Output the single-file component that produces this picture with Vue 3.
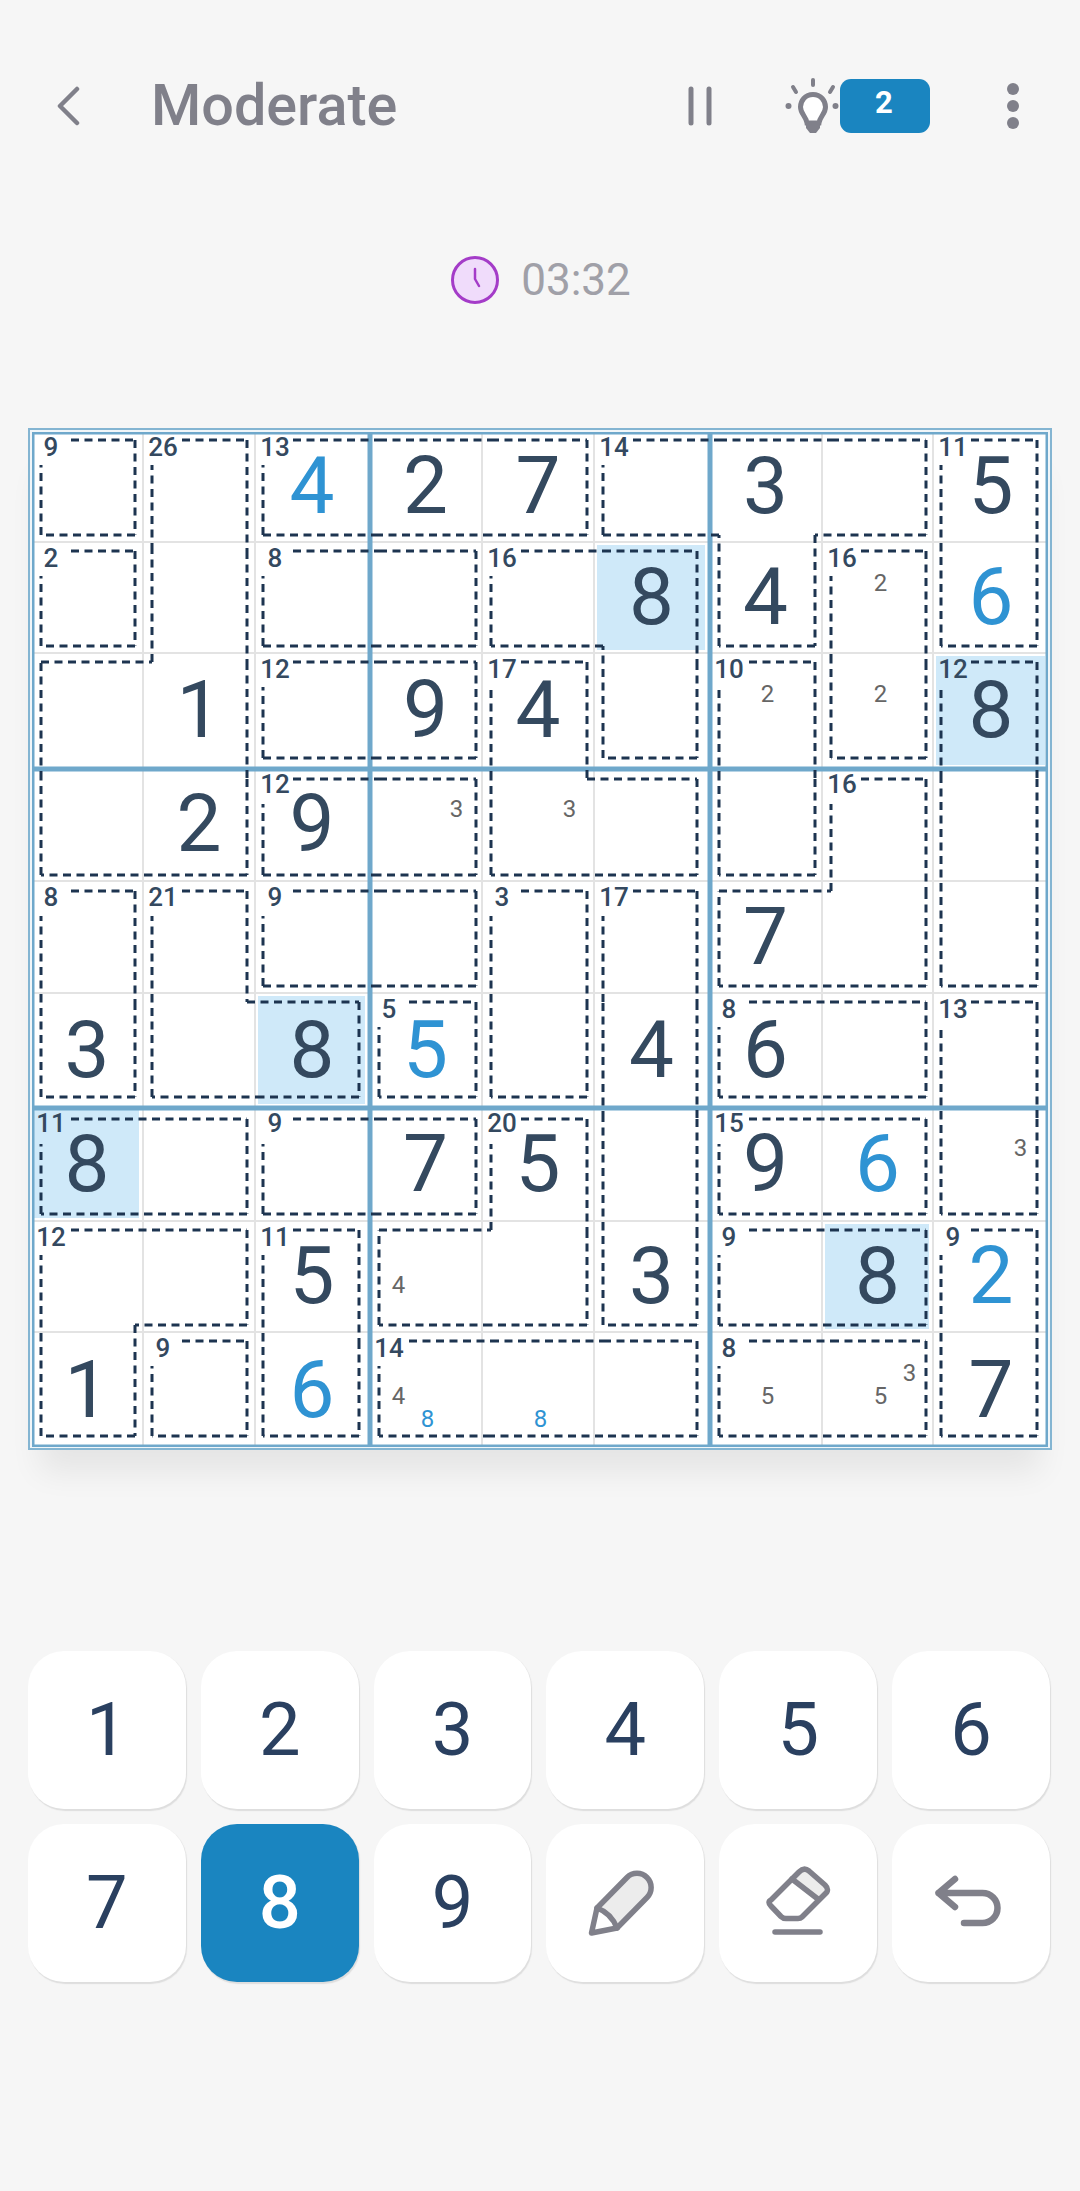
<template>
  <div class="pantalla">
    <header class="cabecera">
      <svg class="atras" width="24" height="40" viewBox="0 0 24 40">
        <polyline points="21,3 4,20 21,37" />
      </svg>
      <h1 class="titulo">Moderate</h1>
      <svg class="pausa" width="26" height="40" viewBox="0 0 26 40">
        <line x1="4" y1="3" x2="4" y2="37" />
        <line x1="22" y1="3" x2="22" y2="37" />
      </svg>
      <svg class="bombilla" width="56" height="56" viewBox="0 0 56 56">
        <path class="bulbo" d="M28 16.5C20 16.5 15.5 23 15.5 29C15.5 36 21 38 22 45L34 45C35 38 40.5 36 40.5 29C40.5 23 36 16.5 28 16.5Z" />
        <path class="casquillo" d="M21 45L35 45L35 50L31 55L25 55L21 50Z" />
        <line x1="28" y1="2" x2="28" y2="7" />
        <line x1="8" y1="9" x2="11" y2="14" />
        <line x1="48" y1="9" x2="45" y2="14" />
        <circle cx="3.5" cy="28" r="3" />
        <circle cx="50.5" cy="28" r="3" />
      </svg>
      <div class="pistas">2</div>
      <svg class="menu" width="12" height="46" viewBox="0 0 12 46">
        <circle cx="6" cy="6" r="6" />
        <circle cx="6" cy="23" r="6" />
        <circle cx="6" cy="40" r="6" />
      </svg>
    </header>

    <div class="tiempo">
      <svg width="48" height="48" viewBox="0 0 48 48">
        <circle class="esfera" cx="24" cy="24" r="22.5" />
        <polyline class="agujas" points="24,13 24,23 28,30" />
      </svg>
      <span>03:32</span>
    </div>

    <section class="tablero">
      <div class="rejilla">
        <div v-for="c in celdas" :key="c.id" class="celda" :class="{ marcada: c.marcada, 'sin-dcha': c.col === 8, 'sin-abajo': c.fila === 8 }">
          <span v-if="c.suma" class="suma">{{ c.suma }}</span>
          <span v-if="c.valor" class="valor" :class="{ azul: c.azul }">{{ c.valor }}</span>
          <div v-if="c.notas.length" class="notas">
            <span
              v-for="n in c.notas"
              :key="n.d"
              class="nota"
              :class="{ azul: n.azul }"
              :style="{ gridColumn: (n.d - 1) % 3 + 1, gridRow: Math.floor((n.d - 1) / 3) + 1 }"
            >{{ n.d }}</span>
          </div>
        </div>
        <svg class="trazos" width="1016" height="1015" viewBox="0 0 1016 1015">
          <rect class="marco" x="1" y="1" width="1014" height="1013" />
          <line class="caja" x1="338" y1="0" x2="338" y2="1015" />
          <line class="caja" x1="678" y1="0" x2="678" y2="1015" />
          <line class="caja" x1="0" y1="337" x2="1016" y2="337" />
          <line class="caja" x1="0" y1="676" x2="1016" y2="676" />
          <line v-for="(t, i) in trazos" :key="i" class="jaula" :x1="t[0]" :y1="t[1]" :x2="t[2]" :y2="t[3]" />
        </svg>
      </div>
    </section>

    <section class="teclado">
      <button v-for="n in 9" :key="n" class="tecla" :class="{ activa: n === 8 }">{{ n }}</button>
      <button class="tecla">
        <svg class="icono" width="80" height="80" viewBox="0 0 80 80">
          <path class="relleno" d="M12 45L42 14.5A14 14 0 0 1 62 34.5L32 65Q26 50 12 45Z" />
          <path d="M12 45L42 14.5A14 14 0 0 1 62 34.5L32 65L6.5 70Z" />
          <path d="M12 45Q26 50 32 65" />
        </svg>
      </button>
      <button class="tecla">
        <svg class="icono" width="80" height="80" viewBox="0 0 80 80">
          <path class="relleno" d="M34 16L41 9Q46 4 51 8L67 22Q72 27 67 31L60.5 36.5Z" />
          <path d="M41 9Q46 4 51 8L67 22Q72 27 67 31L44 54Q42.5 55.5 40 55.5L28 55.5Q25 55.5 23 53.5L13 43Q9 39 13 37Z" />
          <line x1="34" y1="16" x2="60.5" y2="36.5" />
          <line x1="17" y1="69" x2="62" y2="69" />
        </svg>
      </button>
      <button class="tecla">
        <svg class="icono grueso" width="80" height="80" viewBox="0 0 80 80">
          <path d="M24 16L7.5 30L24 44M7.5 30L51.5 30A15 15 0 0 1 51.5 60L33 60" />
        </svg>
      </button>
    </section>
  </div>
</template>

<script setup>
// posiciones de las lineas de jaula, relativas a la rejilla (x - 32, y - 432)
const izq = [9, 120, 231, 347, 459, 571, 687, 799, 909];
const dcha = [103, 215, 327, 444, 555, 665, 783, 894, 1005];
const arriba = [8, 119, 230, 347, 459, 570, 687, 798, 909];
const abajo = [103, 214, 326, 443, 554, 665, 782, 893, 1004];

const valores = [
  "..427.3.5",
  ".....84.6",
  ".1.94...8",
  ".29......",
  "......7..",
  "3.85.46..",
  "8..75.96.",
  "..5..3.82",
  "1.6.....7",
];
const azules = ["0,2", "1,8", "5,3", "6,7", "7,8", "8,2"];
const marcadas = ["1,5", "2,8", "5,2", "6,0", "7,7"];

const notas = {
  "1,7": [{ d: 2 }],
  "2,6": [{ d: 2 }],
  "2,7": [{ d: 2 }],
  "3,3": [{ d: 3 }],
  "3,4": [{ d: 3 }],
  "6,8": [{ d: 3 }],
  "7,3": [{ d: 4 }],
  "8,3": [{ d: 4 }, { d: 8, azul: true }],
  "8,4": [{ d: 8, azul: true }],
  "8,6": [{ d: 5 }],
  "8,7": [{ d: 3 }, { d: 5 }],
};

const jaulas = [
  [9, "0,0"],
  [26, "0,1 1,1 2,1 2,0 3,0 3,1"],
  [13, "0,2 0,3 0,4"],
  [14, "0,5 0,6 0,7 1,6"],
  [11, "0,8 1,8"],
  [2, "1,0"],
  [8, "1,2 1,3"],
  [16, "1,4 1,5 2,5"],
  [16, "1,7 2,7"],
  [12, "2,2 2,3"],
  [17, "2,4 3,4 3,5"],
  [10, "2,6 3,6"],
  [12, "2,8 3,8 4,8"],
  [12, "3,2 3,3"],
  [16, "3,7 4,7 4,6"],
  [8, "4,0 5,0"],
  [21, "4,1 5,1 5,2"],
  [9, "4,2 4,3"],
  [3, "4,4 5,4"],
  [17, "4,5 5,5 6,5 7,5"],
  [5, "5,3"],
  [8, "5,6 5,7"],
  [13, "5,8 6,8"],
  [11, "6,0 6,1"],
  [9, "6,2 6,3"],
  [20, "6,4 7,4 7,3"],
  [15, "6,6 6,7"],
  [12, "7,0 7,1 8,0"],
  [11, "7,2 8,2"],
  [9, "7,6 7,7"],
  [9, "7,8 8,8"],
  [9, "8,1"],
  [14, "8,3 8,4 8,5"],
  [8, "8,6 8,7"],
];

const sumas = {};
const trazos = [];

jaulas.forEach(([suma, lista]) => {
  const set = new Set(lista.split(" "));
  const hay = (f, c) => set.has(`${f},${c}`);
  const claves = [...set];
  sumas[claves[0]] = suma;

  claves.forEach((k, idx) => {
    const [f, c] = k.split(",").map(Number);
    const conSuma = idx === 0;
    const arr = hay(f - 1, c);
    const aba = hay(f + 1, c);
    const ant = hay(f, c - 1);
    const sig = hay(f, c + 1);
    const finX = sig ? izq[c + 1] : dcha[c];
    const finY = aba ? arriba[f + 1] : abajo[f];

    if (!arr) {
      const x1 = ant && hay(f - 1, c - 1) ? dcha[c - 1] : izq[c];
      trazos.push([conSuma ? x1 + 30 : x1, arriba[f], finX, arriba[f]]);
    }
    if (!sig) {
      const y1 = arr && hay(f - 1, c + 1) ? abajo[f - 1] : arriba[f];
      trazos.push([dcha[c], y1, dcha[c], finY]);
    }
    if (!aba) {
      const x1 = ant && hay(f + 1, c - 1) ? dcha[c - 1] : izq[c];
      trazos.push([finX, abajo[f], x1, abajo[f]]);
    }
    if (!ant) {
      const y1 = arr && hay(f - 1, c - 1) ? abajo[f - 1] : arriba[f];
      trazos.push([izq[c], finY, izq[c], conSuma ? y1 + 25 : y1]);
    }
  });
});

const celdas = [];
for (let f = 0; f < 9; f++) {
  const texto = valores[f];
  for (let c = 0; c < 9; c++) {
    const k = `${f},${c}`;
    celdas.push({
      id: k,
      fila: f,
      col: c,
      valor: texto[c] === "." ? "" : texto[c],
      azul: azules.includes(k),
      marcada: marcadas.includes(k),
      suma: sumas[k],
      notas: notas[k] || [],
    });
  }
}
</script>

<style scoped>
.pantalla {
  width: 1080px;
  height: 2191px;
  background: #f6f6f6;
  box-sizing: border-box;
  padding: 79px 28px 0;
  font-family: Roboto, "Liberation Sans", sans-serif;
  overflow: hidden;
}

.cabecera {
  display: flex;
  align-items: center;
  height: 54px;
  padding: 0 33px 0 28px;
}

.atras polyline {
  fill: none;
  stroke: #80808a;
  stroke-width: 4.5;
  stroke-linecap: round;
  stroke-linejoin: round;
}

.titulo {
  margin: 0 0 0 71px;
  font-size: 57.5px;
  font-weight: 500;
  line-height: 54px;
  color: #80808a;
}

.pausa {
  margin-left: auto;
}

.pausa line {
  stroke: #80808a;
  stroke-width: 5;
  stroke-linecap: round;
}

.bombilla {
  margin-left: 72px;
}

.bombilla line {
  stroke: #80808a;
  stroke-width: 4;
  stroke-linecap: round;
}

.bombilla circle,
.casquillo {
  fill: #80808a;
}

.bulbo {
  fill: #fff;
  stroke: #80808a;
  stroke-width: 5;
}

.pistas {
  width: 90px;
  height: 54px;
  margin-left: -1px;
  padding: 0 2px 8px 0;
  box-sizing: border-box;
  border-radius: 11px;
  background: #1a85c0;
  color: #fff;
  font-size: 31px;
  font-weight: 700;
  display: flex;
  align-items: center;
  justify-content: center;
}

.menu {
  margin-left: 77px;
}

.menu circle {
  fill: #80808a;
}

.tiempo {
  margin-top: 123px;
  height: 48px;
  padding-left: 2px;
  display: flex;
  align-items: center;
  justify-content: center;
  gap: 22px;
  font-size: 44px;
  color: #a0a0a8;
}

.esfera {
  fill: #f0dcfb;
  stroke: #a43cc8;
  stroke-width: 3;
}

.agujas {
  fill: none;
  stroke: #a43cc8;
  stroke-width: 2.5;
  stroke-linecap: round;
  stroke-linejoin: round;
}

.tablero {
  margin-top: 124px;
  width: 1024px;
  box-sizing: border-box;
  border: 2px solid #84b5d2;
  padding: 2px 2px 1px;
  background: #f1f6f9;
  box-shadow: 0 34px 30px -12px rgba(0, 0, 0, 0.07);
}

.rejilla {
  position: relative;
  display: grid;
  grid-template-columns: 112px 112px 114px 113px 112px 115px 113px 111px 114px;
  grid-template-rows: 111px 111px 115px 113px 112px 114px 114px 111px 114px;
  background: #fff;
}

.celda {
  position: relative;
  box-sizing: border-box;
  border-right: 2px solid #e3e3e3;
  border-bottom: 2px solid #e3e3e3;
  display: flex;
  align-items: center;
  justify-content: center;
  padding-bottom: 1px;
}

.celda.sin-dcha {
  border-right: 0;
}

.celda.sin-abajo {
  border-bottom: 0;
}

.celda.marcada {
  background: linear-gradient(#cfe9f9, #cfe9f9) 2px 2px / calc(100% - 5px) calc(100% - 4px) no-repeat;
}

.valor {
  font-size: 80px;
  line-height: 1;
  color: #34495f;
}

.valor.azul {
  color: #2f93d3;
}

.suma {
  position: absolute;
  left: 0;
  top: 0;
  width: 38px;
  text-align: center;
  font-size: 26px;
  font-weight: 500;
  line-height: 30px;
  color: #34495f;
}

.notas {
  position: absolute;
  left: 14px;
  top: 29px;
  display: grid;
  grid-template-columns: repeat(3, 29px);
  grid-template-rows: repeat(3, 23px);
}

.nota {
  display: flex;
  align-items: center;
  justify-content: center;
  font-size: 24px;
  line-height: 23px;
  color: #666;
}

.nota.azul {
  color: #2f93d3;
}

.trazos {
  position: absolute;
  left: 0;
  top: 0;
  pointer-events: none;
}

.marco {
  fill: none;
  stroke: #6fa8cb;
  stroke-width: 3;
}

.caja {
  stroke: #6fa8cb;
  stroke-width: 5;
}

.jaula {
  stroke: #1d3450;
  stroke-width: 3;
  stroke-dasharray: 8 5.5;
}

.teclado {
  margin-top: 201px;
  width: 1022px;
  display: grid;
  grid-template-columns: repeat(6, 1fr);
  grid-auto-rows: 158px;
  gap: 15px;
}

.tecla {
  border: 0;
  padding: 0;
  border-radius: 36px;
  background: #fff;
  box-shadow: 1px 1.5px 1px #dedede;
  color: #2a4060;
  font-family: inherit;
  font-size: 74px;
  line-height: 1;
  display: flex;
  align-items: center;
  justify-content: center;
}

.tecla.activa {
  background: #1a85c0;
  color: #fff;
  font-weight: 500;
}

.icono path,
.icono line {
  fill: none;
  stroke: #80808a;
  stroke-width: 5.5;
  stroke-linecap: round;
  stroke-linejoin: round;
}

.icono .relleno {
  fill: #ececec;
  stroke: none;
}

.icono.grueso path {
  stroke-width: 6.5;
}
</style>
